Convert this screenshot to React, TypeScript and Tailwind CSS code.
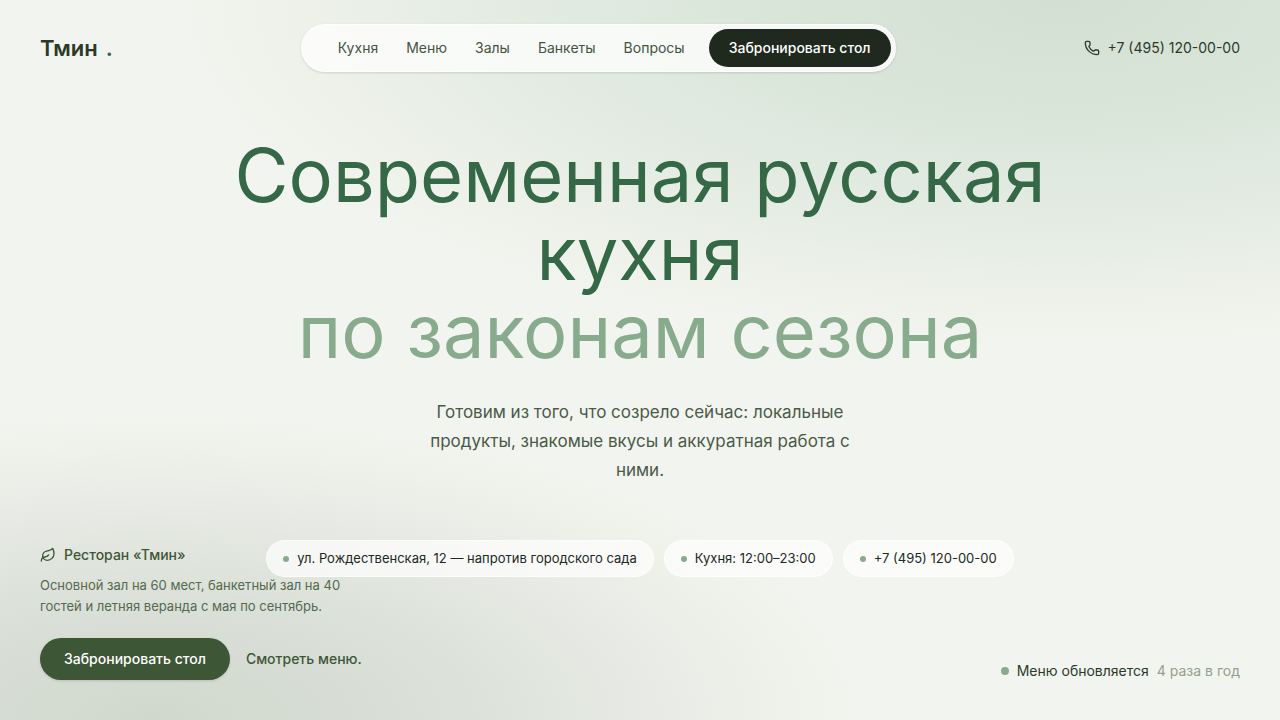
import { Leaf, Phone } from "lucide-react";

const navLinks = [
    { label: 'Кухня', href: '#kitchen' },
    { label: 'Меню', href: '#menu' },
    { label: 'Залы', href: '#halls' },
    { label: 'Банкеты', href: '#banquets' },
    { label: 'Вопросы', href: '#faq' },
];

const facts = [
    'ул. Рождественская, 12 — напротив городского сада',
    'Кухня: 12:00–23:00',
    '+7 (495) 120-00-00',
];

const Header = () => {
    return (
        <header className="flex items-center justify-between px-10 pt-6">
            <a href="#top" className="flex items-baseline gap-2 text-[22px] leading-8 font-semibold text-[#2b3a28]">
                Тмин
                <span className="text-[#356846]">.</span>
            </a>
            <nav className="flex items-center gap-6 rounded-full border border-white/60 bg-white/75 p-1 pl-9 shadow-sm">
                <ul className="flex items-center gap-7 text-sm text-[#44543f]">
                    {navLinks.map((link) => (
                        <li key={link.href}>
                            <a href={link.href}>{link.label}</a>
                        </li>
                    ))}
                </ul>
                <button type="button" className="h-[38px] rounded-full bg-[#20291e] px-5 text-sm font-medium text-white">
                    Забронировать стол
                </button>
            </nav>
            <a href="tel:+74951200000" className="flex items-center gap-2 text-sm text-[#2b3a28]">
                <Phone size={16} strokeWidth={2} />
                +7 (495) 120-00-00
            </a>
        </header>
    )
}

const Hero = () => {
    return (
        <section className="z-10 col-start-1 row-start-1 flex flex-col items-center justify-self-center px-6 pt-16 text-center">
            <h1 className="max-w-[820px] text-[74px] leading-[78px] text-[#356846]">
                Современная русская кухня
                <span className="block text-[#88ab8d]">по законам сезона</span>
            </h1>
            <p className="mt-7 max-w-[448px] text-[17px] leading-[29px] text-[#4a5a48]">
                Готовим из того, что созрело сейчас: локальные продукты, знакомые вкусы и аккуратная работа с ними.
            </p>
            <ul className="mt-[55px] flex flex-wrap justify-center gap-[10px] text-[13px] text-[#20291e]">
                {facts.map((fact) => (
                    <li key={fact} className="flex h-[37px] items-center gap-2 rounded-full border border-white/60 bg-white/70 px-4">
                        <span className="size-[6px] rounded-full bg-[#88ab8d]" />
                        {fact}
                    </li>
                ))}
            </ul>
        </section>
    )
}

const BottomBar = () => {
    return (
        <section className="col-start-1 row-start-1 flex items-end justify-between self-end p-10">
            <div className="max-w-80">
                <h2 className="flex items-center gap-2 text-sm font-medium text-[#3d5636]">
                    <Leaf size={16} strokeWidth={2} />
                    Ресторан «Тмин»
                </h2>
                <p className="mt-[10px] text-[13px] leading-[21px] text-[#54694f]">
                    Основной зал на 60 мест, банкетный зал на 40 гостей и летняя веранда с мая по сентябрь.
                </p>
                <div className="mt-[21px] flex items-center gap-4 text-sm font-medium whitespace-nowrap">
                    <button type="button" className="h-[42px] rounded-full bg-[#3d5636] px-6 text-white shadow-sm">
                        Забронировать стол
                    </button>
                    <a href="#menu" className="text-[#3d5636]">Смотреть меню.</a>
                </div>
            </div>
            <p className="flex h-[18px] items-center gap-2 text-sm text-[#2b3a28]">
                <span className="size-2 rounded-full bg-[#88ab8d]" />
                Меню обновляется
                <span className="text-[#94a08f]">4 раза в год</span>
            </p>
        </section>
    )
}

const App = () => {
    return (
        <div
            id="top"
            className="flex min-h-screen flex-col bg-[#f2f4ef] bg-[radial-gradient(ellipse_900px_350px_at_83%_0%,#d4dfd4_0%,#dce7dc_40%,#e6ede4_68%,#eff2eb_88%,transparent_100%),radial-gradient(ellipse_720px_310px_at_12%_100%,#d0d8cc_0%,#dbe0d9_40%,#e9ece6_72%,#eff1eb_88%,transparent_100%)] font-['Inter','Liberation_Sans',sans-serif]"
        >
            <Header />
            <main className="grid flex-1 grid-cols-1">
                <Hero />
                <BottomBar />
            </main>
        </div>
    )
}

export default App;
